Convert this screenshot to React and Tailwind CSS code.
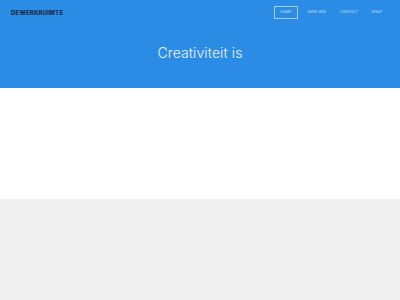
import React from 'react';

const navItems = [
  { label: 'HOME', cls: 'border border-[#a9cdf3] px-[6px] py-[3px]' },
  { label: 'OVER ONS', cls: 'ml-[9px]' },
  { label: 'CONTACT', cls: 'ml-[14px]' },
  { label: 'SHOP', cls: 'ml-[14px]' },
];

export default function App() {
  return (
    <div className="w-[400px] h-[300px] overflow-hidden bg-white" style={{ fontFamily: 'Inter, "Open Sans", sans-serif' }}>
      {/* header */}
      <div className="h-[88px] bg-[#2b8ce6] flex flex-col">
        <div className="h-[25px] flex items-center justify-between pl-[11px] pr-[18px]">
          <span className="text-[6px] font-extrabold tracking-[0.2px] text-[#1c2b3f]">DEWERKRUIMTE</span>
          <nav className="flex items-center">
            {navItems.map((item) => (
              <span key={item.label} className={`text-[3.5px] leading-[5px] text-[#cfe3f8] tracking-[0.1px] ${item.cls}`}>
                {item.label}
              </span>
            ))}
          </nav>
        </div>
        <div className="flex-1 flex justify-center pt-[17px]">
          <h1 className="text-[14px] font-light text-[#eef5fd] tracking-[0.1px]">Creativiteit is</h1>
        </div>
      </div>
      {/* content */}
      <div className="h-[111px] bg-white" />
      <div className="h-[101px] bg-[#efefef]" />
    </div>
  );
}
